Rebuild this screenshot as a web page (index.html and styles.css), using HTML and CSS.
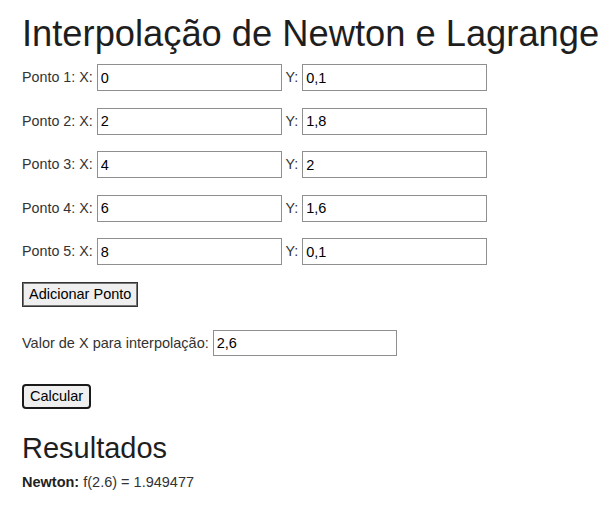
FILE: index.html
```html
<!DOCTYPE html>
<html lang="pt">
<head>
<meta charset="utf-8">
<title>Interpolação de Newton e Lagrange</title>
<link rel="stylesheet" href="styles.css">
</head>
<body>
<div class="app">
  <h1 class="title">Interpolação de Newton e Lagrange</h1>
  <div class="pontos">
    <div class="ponto">Ponto 1: X: <input class="campo" type="text" value="0"> Y: <input class="campo" type="text" value="0,1"></div>
    <div class="ponto">Ponto 2: X: <input class="campo" type="text" value="2"> Y: <input class="campo" type="text" value="1,8"></div>
    <div class="ponto">Ponto 3: X: <input class="campo" type="text" value="4"> Y: <input class="campo" type="text" value="2"></div>
    <div class="ponto">Ponto 4: X: <input class="campo" type="text" value="6"> Y: <input class="campo" type="text" value="1,6"></div>
    <div class="ponto">Ponto 5: X: <input class="campo" type="text" value="8"> Y: <input class="campo" type="text" value="0,1"></div>
  </div>
  <button class="btn btn-add" type="button">Adicionar Ponto</button>
  <div class="valor">Valor de X para interpolação: <input class="campo" type="text" value="2,6"></div>
  <button class="btn btn-calc" type="button">Calcular</button>
  <h2 class="subtitle">Resultados</h2>
  <div class="resultado"><strong>Newton:</strong> f(2.6) = 1.949477</div>
</div>
</body>
</html>
```
FILE: styles.css
```css
html, body {
  margin: 0;
  padding: 0;
  background: #ffffff;
}
body {
  font-family: "Liberation Sans", Arial, sans-serif;
  font-size: 14.5px;
  color: #333333;
}
.app {
  padding: 14px 22px 0 22px;
}
.title {
  font-size: 36.3px;
  font-weight: normal;
  color: #1e1e1e;
  margin: 0 0 10px 0;
  line-height: 40px;
  white-space: nowrap;
}
.ponto {
  margin-bottom: 16.5px;
  height: 27px;
  line-height: 27px;
  font-size: 14.3px;
}
.campo {
  box-sizing: border-box;
  width: 185px;
  height: 27px;
  border: 1px solid #8f8f8f;
  padding: 1px 3px;
  font-family: "Liberation Sans", Arial, sans-serif;
  font-size: 14.5px;
  color: #000000;
  vertical-align: top;
  margin: 0;
  background: #ffffff;
}
.btn {
  display: block;
  font-family: "Liberation Sans", Arial, sans-serif;
  font-size: 14.5px;
  color: #000000;
  background: #efefef;
  height: 25px;
  padding: 0 6px;
  margin: 0;
  line-height: 20px;
}
.btn-add {
  border: 1px solid #333333;
  border-radius: 0;
  box-shadow: inset 0 0 0 1px #767676;
}
.valor {
  margin-top: 23px;
  height: 26px;
  line-height: 26px;
}
.valor .campo {
  width: 184px;
  height: 26px;
}
.btn-calc {
  margin-top: 28px;
  border: 2px solid #1a1a1a;
  border-radius: 4px;
}
.subtitle {
  font-size: 29px;
  font-weight: normal;
  color: #1e1e1e;
  line-height: 30px;
  margin: 24px 0 11px 0;
}
.resultado {
  font-size: 14.5px;
  line-height: 16px;
}
.resultado strong {
  color: #222222;
}
```
